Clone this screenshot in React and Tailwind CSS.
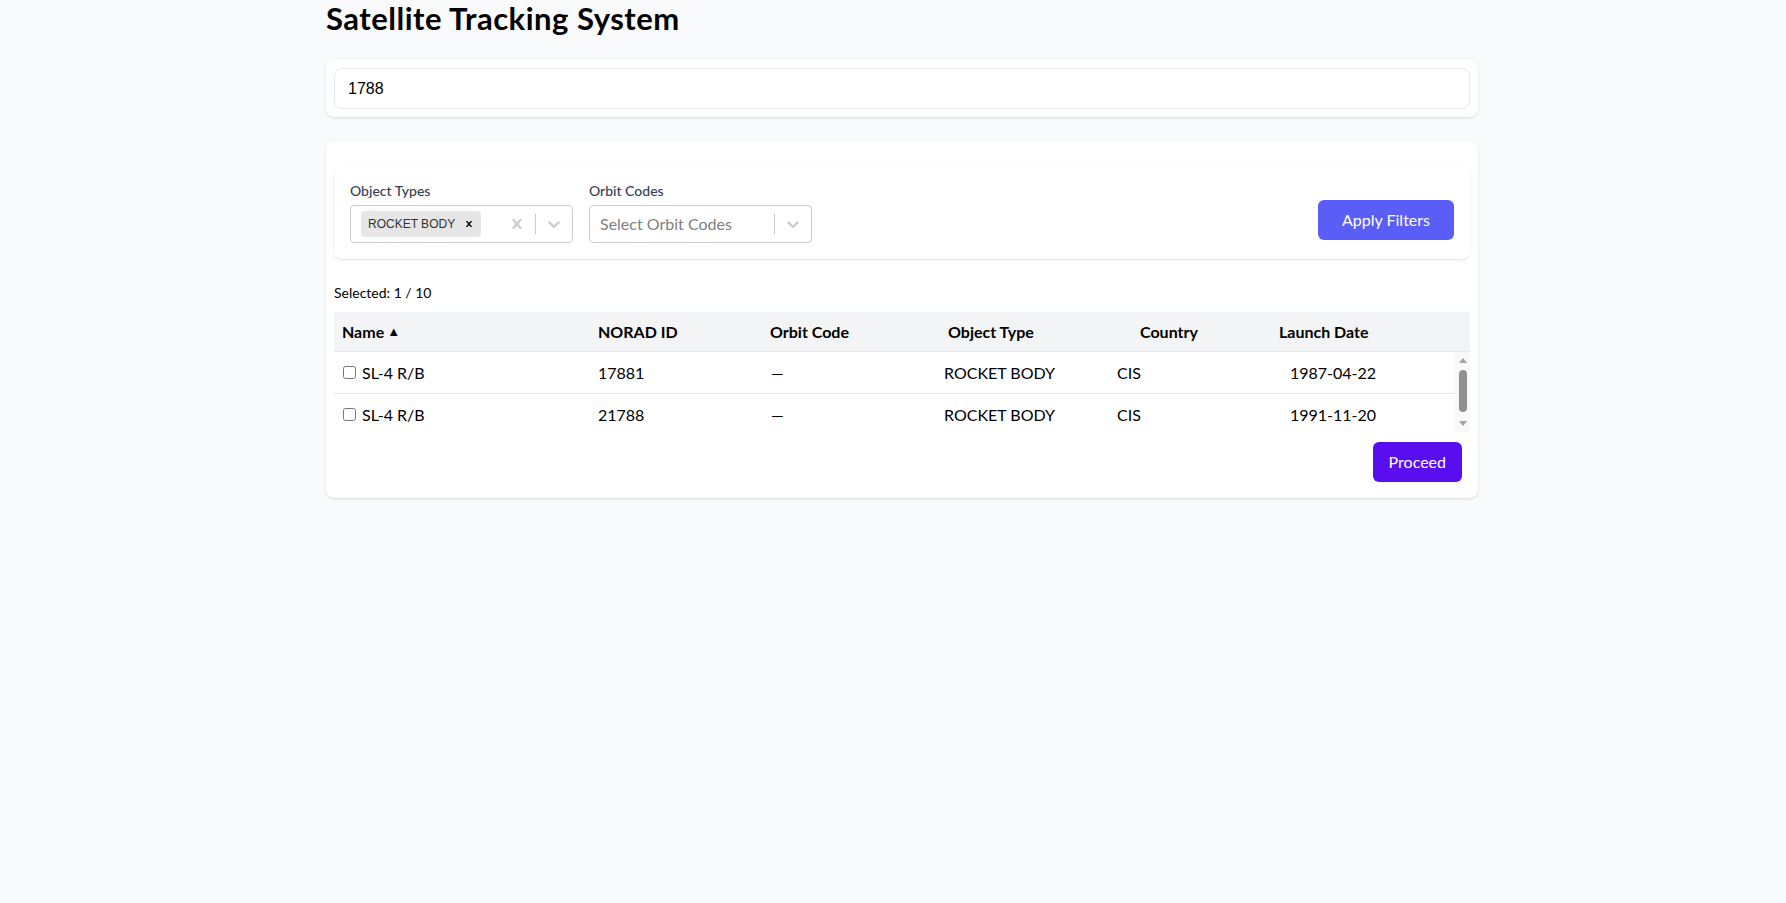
import React, { useState } from 'react';

const rows = [
  { id: 17881, name: 'SL-4 R/B', orbit: '—', type: 'ROCKET BODY', country: 'CIS', date: '1987-04-22' },
  { id: 21788, name: 'SL-4 R/B', orbit: '—', type: 'ROCKET BODY', country: 'CIS', date: '1991-11-20' },
];

const CrossIcon = ({ size = 20, className }) => (
  <svg viewBox="0 0 20 20" width={size} height={size} className={className} fill="currentColor">
    <path d="M14.348 14.849c-0.469 0.469-1.229 0.469-1.697 0l-2.651-3.030-2.651 3.029c-0.469 0.469-1.229 0.469-1.697 0-0.469-0.469-0.469-1.229 0-1.697l2.758-3.15-2.759-3.152c-0.469-0.469-0.469-1.228 0-1.697s1.228-0.469 1.697 0l2.652 3.031 2.651-3.031c0.469-0.469 1.228-0.469 1.697 0s0.469 1.229 0 1.697l-2.758 3.152 2.758 3.15c0.469 0.469 0.469 1.229 0 1.698z" />
  </svg>
);

const ChevronIcon = () => (
  <svg viewBox="0 0 20 20" width="20" height="20" fill="currentColor">
    <path d="M4.516 7.548c0.436-0.446 1.043-0.481 1.576 0l3.908 3.747 3.908-3.747c0.533-0.481 1.141-0.446 1.574 0 0.436 0.445 0.408 1.197 0 1.615-0.406 0.418-4.695 4.502-4.695 4.502-0.217 0.223-0.502 0.335-0.787 0.335s-0.57-0.112-0.789-0.335c0 0-4.287-4.084-4.695-4.502s-0.436-1.17 0-1.615z" />
  </svg>
);

const Indicators = ({ clearable }) => (
  <div className="flex items-center self-stretch shrink-0">
    {clearable && (
      <div className="p-2 text-[#cccccc]">
        <CrossIcon />
      </div>
    )}
    <span className="w-px h-5 bg-[#cccccc]" />
    <div className="p-2 text-[#cccccc]">
      <ChevronIcon />
    </div>
  </div>
);

// classic scrollbar look, drawn since the headless page hides real ones
const ScrollTrack = () => (
  <div className="w-[15px] shrink-0 bg-[#f8f8f8] flex flex-col items-center pt-[6px] pb-[6px]">
    <svg width="8" height="5" viewBox="0 0 8 5" className="text-[#a3a3a3]" fill="currentColor">
      <path d="M4 0L8 5H0z" />
    </svg>
    <div className="w-[8px] h-[42px] mt-[7px] rounded-full bg-[#8f8f8f]" />
    <div className="flex-1" />
    <svg width="8" height="5" viewBox="0 0 8 5" className="text-[#a3a3a3]" fill="currentColor">
      <path d="M0 0H8L4 5z" />
    </svg>
  </div>
);

const App = () => {
  const [search, setSearch] = useState('1788');
  const [checked, setChecked] = useState({});

  return (
    <div className="min-h-screen bg-gray-50 text-black font-['Lato','Noto_Sans',sans-serif]">
      <div className="w-[1152px] ml-[326px]">
        <h1 className="text-[31px] tracking-[0.5px] font-bold leading-9 mb-6">Satellite Tracking System</h1>

        {/* Search */}
        <div className="bg-white rounded-lg shadow-sm p-2 mb-6">
          <input
            type="text"
            value={search}
            onChange={(e) => setSearch(e.target.value)}
            className="w-full h-[41px] rounded-lg border border-gray-200 px-[13px] text-base font-['Liberation_Sans',Arial,sans-serif] outline-none"
          />
        </div>

        {/* Results */}
        <div className="bg-white rounded-lg shadow-sm pt-6 px-2 pb-4">
          {/* Filters */}
          <div className="rounded-lg shadow-sm p-4 flex items-end justify-between">
            <div className="flex gap-4">
              <div>
                <div className="text-sm font-medium text-gray-700 mb-1 leading-5">Object Types</div>
                <div className="w-[223px] h-[38px] border border-[#cccccc] rounded flex items-center">
                  <div className="flex-1 px-2 flex items-center">
                    <div className="m-[2px] h-[26px] bg-[#e6e6e6] rounded-sm flex items-center pl-[7px] pr-[6px] gap-[8px]">
                      <span className="text-[12px] text-[#333333] font-['Liberation_Sans',Arial,sans-serif]">ROCKET BODY</span>
                      <CrossIcon size={12} className="text-black" />
                    </div>
                  </div>
                  <Indicators clearable />
                </div>
              </div>
              <div>
                <div className="text-sm font-medium text-gray-700 mb-1 leading-5">Orbit Codes</div>
                <div className="w-[223px] h-[38px] border border-[#cccccc] rounded flex items-center">
                  <div className="flex-1 px-[10px] text-[#808080] text-base whitespace-nowrap overflow-hidden">
                    Select Orbit Codes
                  </div>
                  <Indicators />
                </div>
              </div>
            </div>
            <button className="h-10 px-6 mb-[3px] rounded-md bg-[#5a5df6] text-white text-base">Apply Filters</button>
          </div>

          <div className="mt-6 mb-[9px] text-sm leading-5">Selected: 1 / 10</div>

          {/* Table header */}
          <div className="grid grid-cols-[256px_172px_178px_192px_139px_1fr] h-[40px] items-center bg-gray-100 border-b border-gray-200 font-bold text-base">
            <div className="pl-2 flex items-center gap-[3px]">
              Name <span className="text-[13px] leading-none">▲</span>
            </div>
            <div className="pl-2">NORAD ID</div>
            <div className="pl-2">Orbit Code</div>
            <div className="pl-2">Object Type</div>
            <div className="pl-2">Country</div>
            <div className="pl-2">Launch Date</div>
          </div>

          {/* Table body */}
          <div className="flex h-[80px] overflow-hidden">
            <div className="flex-1">
              {rows.map((r) => (
                <div
                  key={r.id}
                  className="grid grid-cols-[256px_173px_173px_173px_173px_1fr] h-[42px] items-center border-b border-gray-200 text-base"
                >
                  <div className="pl-[9px] flex items-center gap-[6px]">
                    <input
                      type="checkbox"
                      className="m-0 w-[13px] h-[13px]"
                      checked={!!checked[r.id]}
                      onChange={() => setChecked((c) => ({ ...c, [r.id]: !c[r.id] }))}
                    />
                    <span>{r.name}</span>
                  </div>
                  <div className="pl-2">{r.id}</div>
                  <div className="pl-2">{r.orbit}</div>
                  <div className="pl-2">{r.type}</div>
                  <div className="pl-2">{r.country}</div>
                  <div className="pl-2">{r.date}</div>
                </div>
              ))}
            </div>
            <ScrollTrack />
          </div>

          <div className="flex justify-end mt-2.5 pr-2">
            <button className="h-10 px-4 rounded-md bg-[#590ef0] text-white text-base">Proceed</button>
          </div>
        </div>
      </div>
    </div>
  );
};

export default App;
